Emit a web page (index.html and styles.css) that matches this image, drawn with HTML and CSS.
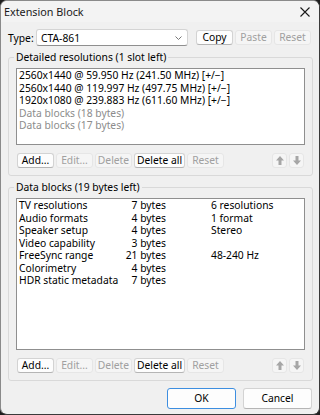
FILE: index.html
```html
<!DOCTYPE html>
<html>
<head>
<meta charset="utf-8">
<title>Extension Block</title>
<link rel="stylesheet" href="styles.css">
</head>
<body>
<div class="window">
  <div class="titlebar">
    <span class="title">Extension Block</span>
    <svg class="close" width="10" height="10" viewBox="0 0 10 10"><path d="M0.5 0.5L9.5 9.5M9.5 0.5L0.5 9.5" stroke="#1a1a1a" stroke-width="1.1" fill="none"/></svg>
  </div>
  <div class="client">
    <div class="type-row">
      <span class="type-label">Type:</span>
      <div class="combo">
        <span>CTA-861</span>
        <svg width="7" height="4" viewBox="0 0 7 4"><path d="M0.5 0.5L3.5 3.5L6.5 0.5" stroke="#777" stroke-width="1" fill="none"/></svg>
      </div>
      <div class="top-btns">
        <button class="btn tbtn">Copy</button>
        <button class="btn tbtn" disabled>Paste</button>
        <button class="btn tbtn" disabled>Reset</button>
      </div>
    </div>

    <fieldset class="group">
      <legend>Detailed resolutions (1 slot left)</legend>
      <ul class="list list-res">
        <li>2560x1440 @ 59.950 Hz (241.50 MHz) [+/−]</li>
        <li>2560x1440 @ 119.997 Hz (497.75 MHz) [+/−]</li>
        <li>1920x1080 @ 239.883 Hz (611.60 MHz) [+/−]</li>
        <li class="dim">Data blocks (18 bytes)</li>
        <li class="dim">Data blocks (17 bytes)</li>
      </ul>
      <div class="btn-row">
        <button class="btn b-add">Add...</button>
        <button class="btn b-edit" disabled>Edit...</button>
        <button class="btn b-del" disabled>Delete</button>
        <button class="btn b-delall">Delete all</button>
        <button class="btn b-reset" disabled>Reset</button>
        <button class="btn arrow arrow-first" disabled><svg width="8" height="9" viewBox="0 0 8 9"><path d="M4 0L8 4.5H5.5V9H2.5V4.5H0Z" fill="#a6a6a6"/></svg></button>
        <button class="btn arrow" disabled><svg width="8" height="9" viewBox="0 0 8 9"><path d="M4 9L8 4.5H5.5V0H2.5V4.5H0Z" fill="#a6a6a6"/></svg></button>
      </div>
    </fieldset>

    <fieldset class="group">
      <legend>Data blocks (19 bytes left)</legend>
      <div class="list list-data">
        <div class="drow"><span>TV resolutions</span><span class="size">7 bytes</span><span class="info">6 resolutions</span></div>
        <div class="drow"><span>Audio formats</span><span class="size">4 bytes</span><span class="info">1 format</span></div>
        <div class="drow"><span>Speaker setup</span><span class="size">4 bytes</span><span class="info">Stereo</span></div>
        <div class="drow"><span>Video capability</span><span class="size">3 bytes</span><span class="info"></span></div>
        <div class="drow"><span>FreeSync range</span><span class="size">21 bytes</span><span class="info">48-240 Hz</span></div>
        <div class="drow"><span>Colorimetry</span><span class="size">4 bytes</span><span class="info"></span></div>
        <div class="drow"><span>HDR static metadata</span><span class="size">7 bytes</span><span class="info"></span></div>
      </div>
      <div class="btn-row">
        <button class="btn b-add">Add...</button>
        <button class="btn b-edit" disabled>Edit...</button>
        <button class="btn b-del" disabled>Delete</button>
        <button class="btn b-delall">Delete all</button>
        <button class="btn b-reset" disabled>Reset</button>
        <button class="btn arrow arrow-first" disabled><svg width="8" height="9" viewBox="0 0 8 9"><path d="M4 0L8 4.5H5.5V9H2.5V4.5H0Z" fill="#a6a6a6"/></svg></button>
        <button class="btn arrow" disabled><svg width="8" height="9" viewBox="0 0 8 9"><path d="M4 9L8 4.5H5.5V0H2.5V4.5H0Z" fill="#a6a6a6"/></svg></button>
      </div>
    </fieldset>

    <div class="footer">
      <button class="btn big default">OK</button>
      <button class="btn big">Cancel</button>
    </div>
  </div>
</div>
</body>
</html>
```

FILE: styles.css
```css
html, body {
  margin: 0;
  padding: 0;
  background: #1e1e1e;
}

.window {
  box-sizing: border-box;
  width: 320px;
  height: 415px;
  background: #f0f0f0;
  border: 1px solid #8a8a8a;
  border-right-color: #3a3a3a;
  border-bottom-color: #3a3a3a;
  border-radius: 7px;
  overflow: hidden;
  font-family: "Noto Sans", "Open Sans", sans-serif;
  font-size: 10.3px;
  color: #000;
}

.titlebar {
  height: 21px;
  display: flex;
  align-items: center;
  justify-content: space-between;
  padding: 0 9px 0 3px;
  background: #f3f3f3;
}

.title {
  font-size: 10.8px;
  color: #1a1a1a;
}

.client {
  padding: 7px 0 0 7px;
}

.type-row {
  display: flex;
  align-items: center;
  height: 17px;
}

.type-label {
  width: 28px;
}

.combo {
  box-sizing: border-box;
  width: 152px;
  height: 17px;
  background: #fff;
  border: 1px solid #d4d4d4;
  border-bottom-color: #8f8f8f;
  border-radius: 3px;
  display: flex;
  align-items: center;
  justify-content: space-between;
  padding: 0 5px 0 4px;
}

.top-btns {
  display: flex;
  gap: 2px;
  margin-left: 8px;
}

.btn {
  box-sizing: border-box;
  font: inherit;
  color: #000;
  background: #fdfdfd;
  border: 1px solid #d3d3d3;
  border-bottom-color: #b5b5b5;
  border-radius: 3px;
  padding: 0;
  margin: 0;
  height: 15px;
  line-height: 13px;
  display: flex;
  align-items: center;
  justify-content: center;
}

.btn:disabled {
  color: #a0a0a0;
  background: #f5f5f5;
  border-color: #e6e6e6;
}

.tbtn {
  width: 37px;
}

.group {
  box-sizing: border-box;
  width: 305px;
  min-width: 0;
  margin: 5px 0 0 0;
  padding: 0 7px 7px 7px;
  border: 1px solid #d9d9d9;
  border-radius: 3px;
}

.group legend {
  padding: 0 2px;
  margin-left: -2px;
  line-height: 12px;
}

.list {
  box-sizing: border-box;
  width: 289px;
  margin: 5px 0 0 0;
  padding: 0 2px;
  list-style: none;
  background: #fff;
  border: 1px solid #8f8f8f;
  line-height: 12.5px;
  white-space: nowrap;
}

.list-res {
  height: 77px;
}

.list-data {
  height: 152px;
}

.dim {
  color: #8c8c8c;
}

.drow {
  display: grid;
  grid-template-columns: 100px 47px 1fr;
}

.size {
  text-align: right;
}

.info {
  padding-left: 45px;
}

.btn-row {
  display: flex;
  gap: 2px;
  margin-top: 8px;
  padding: 0 1px;
}

.b-add, .b-edit, .b-del, .b-reset {
  width: 37px;
}

.b-delall {
  width: 51px;
}

.arrow {
  width: 15px;
}

.arrow-first {
  margin-left: auto;
}

.footer {
  display: flex;
  justify-content: flex-end;
  gap: 7px;
  width: 305px;
  box-sizing: border-box;
  padding-right: 1px;
  margin-top: 7px;
}

.big {
  width: 69px;
  height: 21px;
}

.default {
  border: 1px solid #3d8ee0;
}
```
